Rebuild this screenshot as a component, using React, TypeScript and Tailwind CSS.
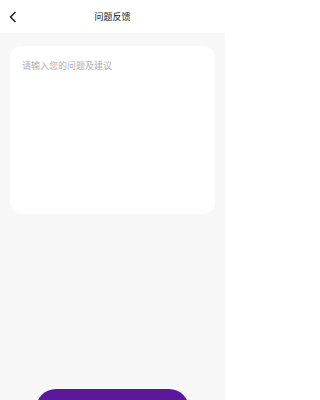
import React from "react";

function BackIcon() {
  return (
    <svg width="10" height="12" viewBox="0 0 10 12" fill="none">
      <path d="M7 1.5L2.5 6L7 10.5" stroke="#222" strokeWidth="1.6" strokeLinecap="round" strokeLinejoin="round" />
    </svg>
  );
}

export default function App() {
  return (
    <div
      className="min-h-screen w-[225px] overflow-hidden bg-[#f7f7f7] flex flex-col"
      style={{ fontFamily: '"Noto Sans", "Noto Sans CJK SC", sans-serif' }}
    >
      <div className="h-[33px] bg-white flex items-center relative shrink-0">
        <div className="pl-[8px] flex items-center">
          <BackIcon />
        </div>
        <div className="absolute inset-x-0 text-center text-[9px] text-[#222] pointer-events-none leading-[33px]">
          问题反馈
        </div>
      </div>

      <div className="px-[10px] pt-[13px]">
        <div className="h-[168px] bg-white rounded-[12px] px-[12px] pt-[14px]">
          <p className="text-[9px] text-[#b0b0b0] leading-[12px]">请输入您的问题及建议</p>
        </div>
      </div>

      <div className="mt-[175px] px-[36px]">
        <button className="w-full h-[40px] rounded-full bg-[#5b189b] text-white text-[10px] flex items-center justify-center">
          提交反馈
        </button>
      </div>
    </div>
  );
}
